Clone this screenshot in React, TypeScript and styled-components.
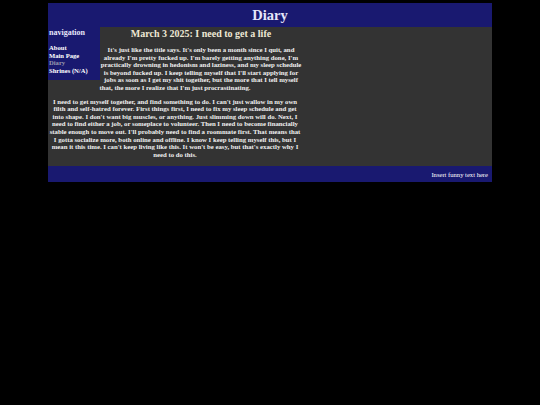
import styled, { createGlobalStyle } from "styled-components";

const GlobalStyle = createGlobalStyle`
  html, body {
    margin: 0;
    padding: 0;
    background: #000;
  }
  body {
    font-family: "Liberation Serif", "Times New Roman", serif;
  }
`;

const Page = styled.div`
  width: 444px;
  margin: 3px auto 0;
  font-family: "Liberation Serif", "Times New Roman", serif;
`;

const Header = styled.header`
  height: 24px;
  background: #191970;
  color: #e6e6fa;
  display: flex;
  align-items: center;
  justify-content: center;
  font-family: "Liberation Serif", "Times New Roman", serif;
  font-size: 14.5px;
  font-weight: bold;
`;

const Main = styled.main`
  background: #333333;
  height: 139px;
  overflow: hidden;
`;

const Content = styled.div`
  width: 254px;
`;

const Sidebar = styled.nav`
  float: left;
  width: 51px;
  height: 53px;
  padding-left: 1px;
  background: #191970;
`;

const NavTitle = styled.div`
  font-size: 8px;
  font-weight: bold;
  color: #e6e6fa;
  padding-top: 1px;
  margin-bottom: 7px;
`;

const NavLink = styled.div<{ $current?: boolean }>`
  font-size: 6.6px;
  line-height: 7.6px;
  font-weight: bold;
  white-space: nowrap;
  color: ${(p) => (p.$current ? "#9a9aae" : "#ffffff")};
`;

const Title = styled.h1`
  margin: 0;
  padding-top: 1px;
  font-size: 10px;
  line-height: 12px;
  font-weight: bold;
  text-align: center;
  color: #eee8d5;
`;

const Para = styled.p`
  margin: 6px 0 0;
  font-size: 6.75px;
  line-height: 7.6px;
  font-weight: bold;
  text-align: center;
  color: #f0f0f0;
`;

const Footer = styled.footer`
  height: 16px;
  background: #191970;
  color: #ffffff;
  display: flex;
  align-items: center;
  justify-content: flex-end;
  padding-right: 4px;
  font-size: 6.6px;
`;

export default function App() {
  return (
    <>
      <GlobalStyle />
      <Page>
        <Header>Diary</Header>
        <Main>
          <Content>
            <Sidebar>
              <NavTitle>navigation</NavTitle>
              <NavLink>About</NavLink>
              <NavLink>Main Page</NavLink>
              <NavLink $current>Diary</NavLink>
              <NavLink>Shrines (N/A)</NavLink>
            </Sidebar>
            <Title>March 3 2025: I need to get a life</Title>
            <Para>
              It's just like the title says. It's only been a month since I
              quit, and already I'm pretty fucked up. I'm barely getting
              anything done, I'm practically drowning in hedonism and laziness,
              and my sleep schedule is beyond fucked up. I keep telling myself
              that I'll start applying for jobs as soon as I get my shit
              together, but the more that I tell myself that, the more I realize
              that I'm just procrastinating.
            </Para>
            <Para>
              I need to get myself together, and find something to do. I can't
              just wallow in my own filth and self-hatred forever. First things
              first, I need to fix my sleep schedule and get into shape. I don't
              want big muscles, or anything. Just slimming down will do. Next,
              I need to find either a job, or someplace to volunteer. Then I
              need to become financially stable enough to move out. I'll
              probably need to find a roommate first. That means that I gotta
              socialize more, both online and offline. I know I keep telling
              myself this, but I mean it this time. I can't keep living like
              this. It won't be easy, but that's exactly why I need to do this.
            </Para>
          </Content>
        </Main>
        <Footer>Insert funny text here</Footer>
      </Page>
    </>
  );
}
